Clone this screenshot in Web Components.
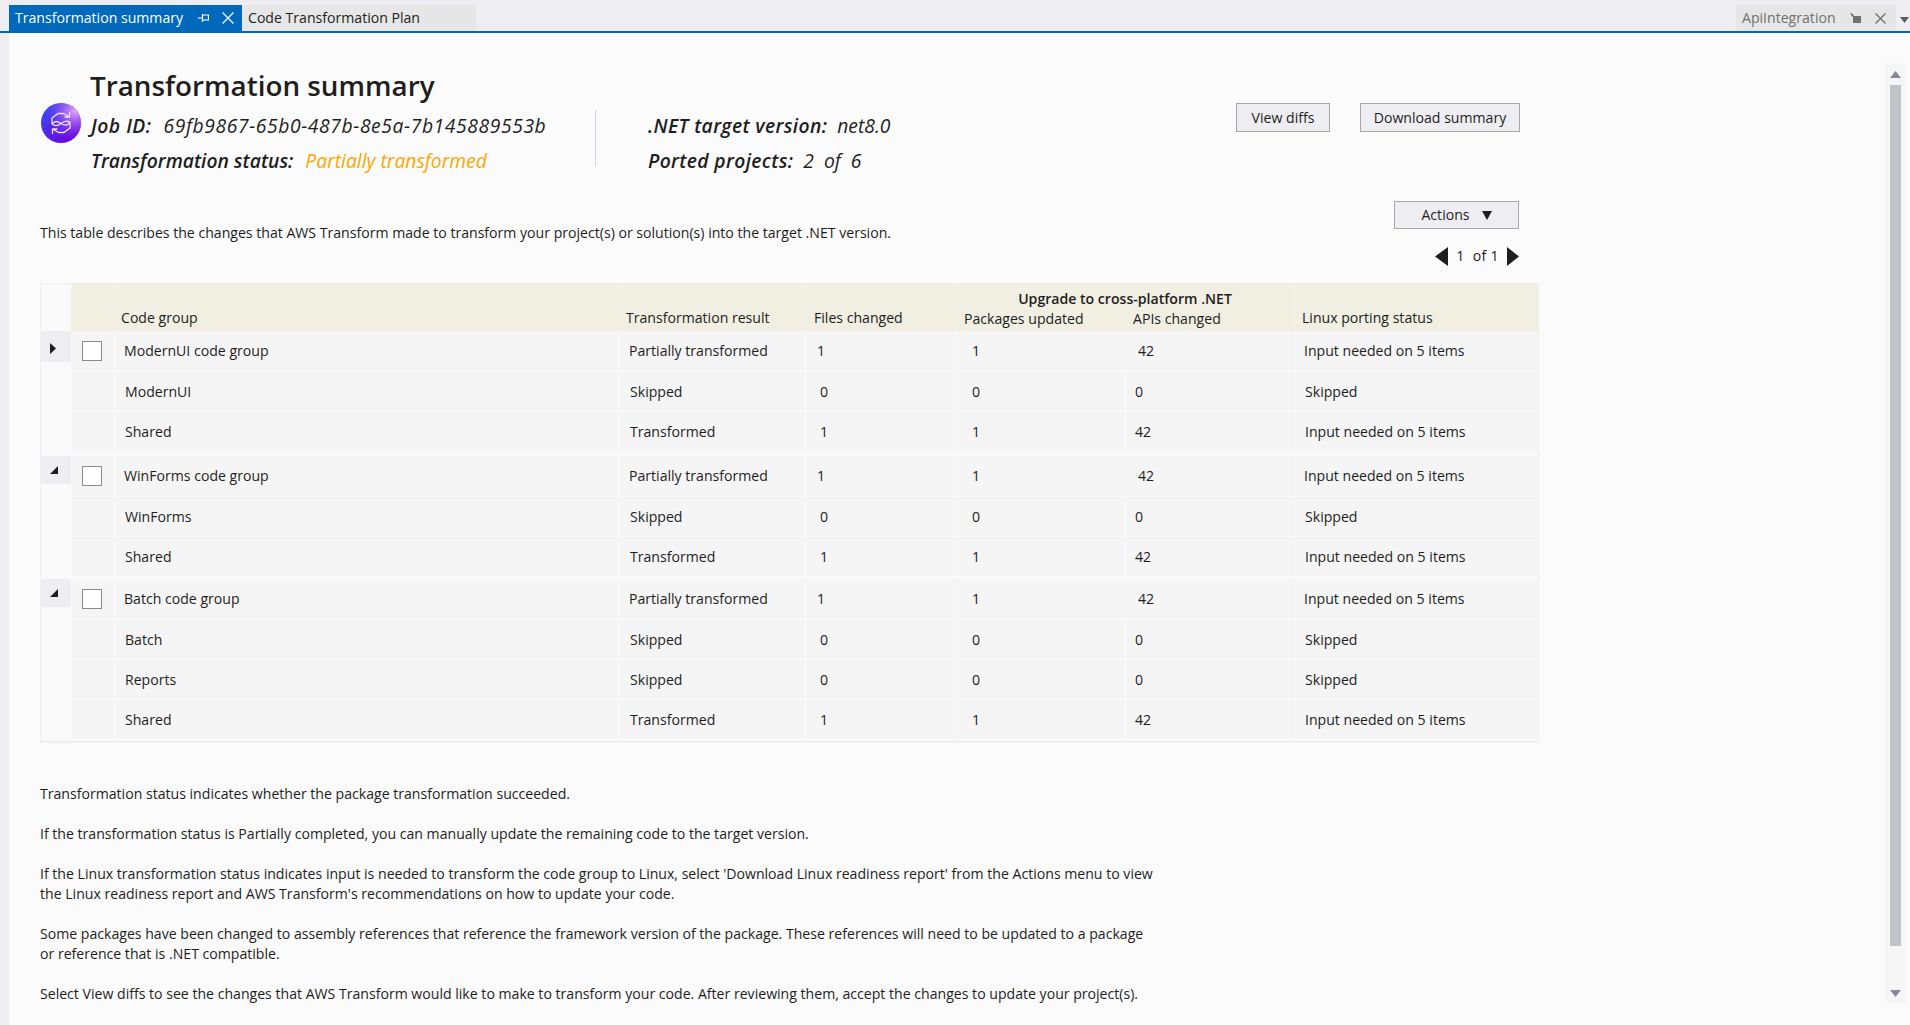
<!doctype html>
<html><head><meta charset="utf-8"><style>
html,body{margin:0;height:100%;overflow:hidden;background:#eeeef2}
body{font:14.1px/20px "Open Sans","Noto Sans",sans-serif;color:#1e1e1e}
#page{height:1025px;display:flex;flex-direction:column}
</style></head><body>
<template id="t-strip"><style>
:host{display:flex;height:33px;box-sizing:border-box;padding:5px 0 0 9px;border-bottom:2px solid #0069bc;align-items:stretch}
.sp{flex:1}.r{display:flex;align-items:center;width:10px;padding-left:4px;padding-top:3px}
</style><slot></slot><div class="sp"></div><slot name="end"></slot><div class="r"><svg width="9" height="6" viewBox="0 0 9 6"><path d="M0 0h9L4.500 6z" fill="#5a5a64"/></svg></div></template>
<template id="t-tab"><style>
:host{display:flex;align-items:center;height:26px;box-sizing:border-box;background:#e6e6e6;color:#1e1e1e;padding-left:6px;overflow:hidden;white-space:nowrap}
:host([active]){background:#0069bc;color:#fff;padding-right:8px}
:host([muted]){color:#717171;padding-right:10px}
.t{display:block;flex:1;padding-bottom:1px}
:host([active]) .t{padding-bottom:0}
::slotted(svg){flex:none}
</style><span class="t"><slot></slot></span><slot name="icons"></slot></template>
<template id="t-canvas"><style>
:host{display:flex;flex:1;min-height:0;margin-left:9px;background:#fbfbfb}
.c{flex:1;min-width:0;padding:0 0 0 31px}
.s{flex:none;width:21px;margin:30px 4px 22px 0}
</style><div class="c"><slot></slot></div><div class="s"><slot name="scroll"></slot></div></template>
<template id="t-scroll"><style>
:host{display:flex;flex-direction:column;align-items:center;height:100%;background:#f6f6f6}
.th{flex:1;width:11px;background:#c2c3c9;margin:7px 0 44px}
svg{display:block;flex:none}
</style><svg width="11" height="7" viewBox="0 0 11 7" style="margin-top:8px"><path d="M5.500 0L11 7H0z" fill="#868999"/></svg><div class="th"></div><svg width="11" height="7" viewBox="0 0 11 7" style="margin-bottom:6px"><path d="M0 0h11L5.500 7z" fill="#868999"/></svg></template>
<template id="t-head"><style>
:host{display:block;height:168px;box-sizing:border-box}
h1{margin:0 0 0 50px;padding-top:32px;font-weight:600;font-size:27.800px;line-height:41px}
.g{display:grid;grid-template-columns:50px 506px 52px 1fr auto;height:60px;align-items:start}
.ic{margin:-3px 0 0 1px}
.ic ::slotted(svg){display:block}
.col{font-style:italic;font-size:19.300px;line-height:35px;white-space:nowrap;padding-top:2px}
.col b{font-weight:600;margin-right:7px}
.row{height:35px}
.a{padding-left:1px}
.job b{letter-spacing:.5px}
.jv{letter-spacing:.6px}
.wide b{letter-spacing:.35px;margin-right:5px}
.dv{width:1px;height:56px;background:#d0d3e2;margin:4px 0 0 -1px}
.am{color:#ffa500}
.pt{letter-spacing:-.1px}
.btns{display:flex;gap:30px;margin:-3px 365px 0 0;width:284px}
</style><h1><slot name="title"></slot></h1>
<div class="g"><div class="ic"><slot name="icon"></slot></div>
<div class="col a"><div class="row job"><b>Job ID:</b> <span class="jv"><slot name="job"></slot></span></div><div class="row"><b>Transformation status:</b> <span class="am"><slot name="status"></slot></span></div></div>
<div class="dv"></div>
<div class="col wide"><div class="row"><b>.NET target version:</b> <slot name="ver"></slot></div><div class="row"><b>Ported projects:</b> <slot name="ported"></slot></div></div>
<div class="btns"><slot name="btns"></slot></div></div></template>
<template id="t-btn"><style>
:host{display:inline-flex;box-sizing:border-box;height:29px;align-items:center;justify-content:center;background:#eeeef2;border:1px solid #a8a8a8;color:#1e1e1e;white-space:nowrap}
.a{margin-left:12px;display:none}
:host([menu]) .a{display:block}
</style><slot></slot><svg class="a" width="10" height="9" viewBox="0 0 10 9"><path d="M0 0h10L5 9z" fill="#1e1e1e"/></svg></template>
<template id="t-toolbar"><style>
:host{display:flex;width:1479px;height:82px;box-sizing:border-box;justify-content:space-between;align-items:flex-start}
.d{padding-top:22px}
.r{display:flex;flex-direction:column;align-items:flex-end;gap:18px}
.p{display:flex;align-items:center;gap:8px;height:19px;letter-spacing:.35px}
.p span{display:block;margin-top:-2px}
svg{display:block}
</style><div class="d"><slot></slot></div><div class="r"><slot name="actions"></slot><div class="p"><svg width="13" height="19" viewBox="0 0 13 19"><path d="M13 0v19L0 9.500z" fill="#1e1e1e"/></svg><span><slot name="pager"></slot></span><svg width="12" height="19" viewBox="0 0 12 19"><path d="M0 0v19l12-9.500z" fill="#1e1e1e"/></svg></div></div></template>
<template id="t-table"><style>
:host{display:block;width:1499px;box-sizing:border-box;border:1px solid #efeff3;border-bottom-width:2px;background:#fafafa;height:460px}
</style><slot></slot></template>
<template id="t-hrow"><style>
:host{display:grid;grid-template-columns:30px 43px 504px 187px 150px 170px 169px 244px;grid-template-rows:30px 17px;height:47px}
.e{grid-row:1/3}
.c{grid-row:1/3;background:#f0efe2;border-left:1px solid #f3f2e8;box-sizing:border-box;display:flex;align-items:flex-end;line-height:20px;padding-bottom:3px;white-space:nowrap}
.u{grid-column:6/8;grid-row:1;background:#f0efe2;text-align:center;font-weight:600;padding-top:5px;white-space:nowrap;line-height:20px;border-left:1px solid #f3f2e8}
.l{background:#f0efe2;display:flex;white-space:nowrap;line-height:20px;margin-top:-5px;align-items:center;height:22px;padding-bottom:2px;box-sizing:border-box}
</style><div class="e"></div><div class="c"></div><div class="c" style="padding-left:6px"><slot name="c1"></slot></div><div class="c" style="padding-left:7px"><slot name="c2"></slot></div><div class="c" style="padding-left:8px"><slot name="c3"></slot></div>
<div class="u"><slot name="up"></slot></div><div class="l" style="grid-column:6;grid-row:2;padding-left:9px"><slot name="c4"></slot></div><div class="l" style="grid-column:7;grid-row:2;padding-left:8px"><slot name="c5"></slot></div>
<div class="c" style="padding-left:7px;grid-column:8"><slot name="c6"></slot></div></template>
<template id="t-row"><style>
:host{display:grid;grid-template-columns:30px 43px 504px 187px 150px 170px 169px 244px;height:39px;margin-top:1px}
:host([group]){height:40px;margin-top:5px}
:host([first]){margin-top:0}
:host([last-group]){margin-top:3px}
.c{background:#f5f5f5;box-sizing:border-box;border-left:1px solid #f9f9f9;display:flex;align-items:center;white-space:nowrap}
.c1{padding-left:10px}.c2{padding-left:11px}.c3{padding-left:14px}.c4{padding-left:16px}.c5{padding-left:9px}.c6{padding-left:10px}
:host([group]) .c1{padding-left:9px}:host([group]) .c2{padding-left:10px}:host([group]) .c3{padding-left:11px}:host([group]) .c5{padding-left:12px}:host([group]) .c6{padding-left:9px}
.ex{display:none;height:28px;background:#eeeef2;align-items:center;padding:0 0 0 9px;box-sizing:border-box}
:host([group]) .ex{display:flex}
:host([first]) .ex{height:31px;padding-top:3px}
.ex svg{display:none}
:host([open]) .ex .o,:host(:not([open])) .ex .cl{display:block}
.bx{visibility:hidden;width:20px;height:20px;box-sizing:border-box;background:#fff;border:1px solid #8a8a8a;margin:0 0 0 10px}
:host([group]) .bx{visibility:visible}
:host([group]) .c5{border-left-color:#f5f5f5}
</style><div><div class="ex"><svg class="cl" width="6" height="11" viewBox="0 0 6 11"><path d="M0 0l6 5.500L0 11z" fill="#1e1e1e"/></svg><svg class="o" width="8" height="8" viewBox="0 0 8 8"><path d="M8 0v8H0z" fill="#1e1e1e"/></svg></div></div>
<div class="c"><div class="bx"></div></div>
<div class="c c1"><slot name="a"></slot></div><div class="c c2"><slot name="b"></slot></div><div class="c c3"><slot name="d"></slot></div><div class="c c4"><slot name="e"></slot></div><div class="c c5"><slot name="f"></slot></div><div class="c c6"><slot name="g"></slot></div></template>
<template id="t-notes"><style>
:host{display:block;width:1120px;padding-top:41px}
::slotted(p){margin:0 0 20px;line-height:20px}
</style><slot></slot></template>
<script>
for(const [n,t] of [['tab-strip','t-strip'],['doc-tab','t-tab'],['doc-canvas','t-canvas'],['v-scroll','t-scroll'],['summary-head','t-head'],['act-btn','t-btn'],['tool-bar','t-toolbar'],['data-table','t-table'],['head-row','t-hrow'],['data-row','t-row'],['note-list','t-notes']]){
 customElements.define(n,class extends HTMLElement{constructor(){super();this.attachShadow({mode:'open'}).append(document.getElementById(t).content.cloneNode(true))}});
}
</script>
<div id="page">
<tab-strip>
 <doc-tab active style="width:233px">Transformation summary
  <svg slot="icons" width="11" height="10" viewBox="0 0 11 10" fill="none" stroke="#fff" stroke-width="1.200"><path d="M0 5h4M4.500 1v8M4.500 2h6v5h-6"/></svg>
  <svg slot="icons" width="12" height="12" viewBox="0 0 12 12" style="margin-left:13px" fill="none" stroke="#dbe9f6" stroke-width="1.500"><path d="M.5.500l11 11M11.500.500l-11 11"/></svg>
 </doc-tab>
 <doc-tab style="width:234px">Code Transformation Plan</doc-tab>
 <doc-tab slot="end" muted style="width:160px">ApiIntegration
  <svg slot="icons" width="12" height="11" viewBox="0 0 12 11" fill="#717171"><path d="M3 3h8v7H3zM0 0l3 1 1 2-2 .5z"/></svg>
  <svg slot="icons" width="11" height="11" viewBox="0 0 11 11" style="margin-left:13px" fill="none" stroke="#717171" stroke-width="1.400"><path d="M.5.500l10 10M10.500.500l-10 10"/></svg>
 </doc-tab>
</tab-strip>
<doc-canvas>
 <summary-head>
  <span slot="title">Transformation summary</span>
  <svg slot="icon" width="40" height="40" viewBox="0 0 40 40"><defs><radialGradient id="g1" cx=".85" cy=".2" r=".75"><stop offset="0" stop-color="#e3a8f7"/><stop offset="1" stop-color="#8a3cf0" stop-opacity="0"/></radialGradient><linearGradient id="g2" x1="0" y1=".3" x2=".7" y2="1"><stop offset="0" stop-color="#3a46ee"/><stop offset="1" stop-color="#7000e0"/></linearGradient></defs><circle cx="20" cy="20" r="20" fill="url(#g2)"/><circle cx="20" cy="20" r="20" fill="url(#g1)"/><g fill="none" stroke="#efe0ff" stroke-width="1.300" stroke-linejoin="round"><path d="M11 21v-6l6-4.500h5.500l5 3M28.500 9v5h-5"/><path d="M29 19v6l-6 4.500h-5.500l-5-3M11.500 31v-5h5"/><path d="M11 21c3 2.500 6 2 9-.500s6-3 9-1.500M11 21c3-3.500 5-3 9-.500s6 2.500 9-1.500"/></g></svg>
  <span slot="job">69fb9867-65b0-487b-8e5a-7b145889553b</span>
  <span slot="status">Partially transformed</span>
  <span slot="ver">net8.0</span>
  <span slot="ported">2&nbsp; of&nbsp; 6</span>
  <act-btn slot="btns" style="width:94px">View diffs</act-btn>
  <act-btn slot="btns" style="width:160px">Download summary</act-btn>
 </summary-head>
 <tool-bar>
  This table describes the changes that AWS Transform made to transform your project(s) or solution(s) into the target .NET version.
  <act-btn slot="actions" menu style="width:125px;height:28px">Actions</act-btn>
  <span slot="pager">1&nbsp; of 1</span>
 </tool-bar>
 <data-table>
  <head-row><span slot="c1">Code group</span><span slot="c2">Transformation result</span><span slot="c3">Files changed</span><span slot="up">Upgrade to cross-platform .NET</span><span slot="c4">Packages updated</span><span slot="c5">APIs changed</span><span slot="c6">Linux porting status</span></head-row>
  <data-row group first><span slot="a">ModernUI code group</span><span slot="b">Partially transformed</span><span slot="d">1</span><span slot="e">1</span><span slot="f">42</span><span slot="g">Input needed on 5 items</span></data-row>
  <data-row><span slot="a">ModernUI</span><span slot="b">Skipped</span><span slot="d">0</span><span slot="e">0</span><span slot="f">0</span><span slot="g">Skipped</span></data-row>
  <data-row><span slot="a">Shared</span><span slot="b">Transformed</span><span slot="d">1</span><span slot="e">1</span><span slot="f">42</span><span slot="g">Input needed on 5 items</span></data-row>
  <data-row group open><span slot="a">WinForms code group</span><span slot="b">Partially transformed</span><span slot="d">1</span><span slot="e">1</span><span slot="f">42</span><span slot="g">Input needed on 5 items</span></data-row>
  <data-row><span slot="a">WinForms</span><span slot="b">Skipped</span><span slot="d">0</span><span slot="e">0</span><span slot="f">0</span><span slot="g">Skipped</span></data-row>
  <data-row><span slot="a">Shared</span><span slot="b">Transformed</span><span slot="d">1</span><span slot="e">1</span><span slot="f">42</span><span slot="g">Input needed on 5 items</span></data-row>
  <data-row group open last-group><span slot="a">Batch code group</span><span slot="b">Partially transformed</span><span slot="d">1</span><span slot="e">1</span><span slot="f">42</span><span slot="g">Input needed on 5 items</span></data-row>
  <data-row><span slot="a">Batch</span><span slot="b">Skipped</span><span slot="d">0</span><span slot="e">0</span><span slot="f">0</span><span slot="g">Skipped</span></data-row>
  <data-row><span slot="a">Reports</span><span slot="b">Skipped</span><span slot="d">0</span><span slot="e">0</span><span slot="f">0</span><span slot="g">Skipped</span></data-row>
  <data-row><span slot="a">Shared</span><span slot="b">Transformed</span><span slot="d">1</span><span slot="e">1</span><span slot="f">42</span><span slot="g">Input needed on 5 items</span></data-row>
 </data-table>
 <note-list>
  <p>Transformation status indicates whether the package transformation succeeded.</p>
  <p>If the transformation status is Partially completed, you can manually update the remaining code to the target version.</p>
  <p>If the Linux transformation status indicates input is needed to transform the code group to Linux, select 'Download Linux readiness report' from the Actions menu to view the Linux readiness report and AWS Transform's recommendations on how to update your code.</p>
  <p>Some packages have been changed to assembly references that reference the framework version of the package. These references will need to be updated to a package or reference that is .NET compatible.</p>
  <p>Select View diffs to see the changes that AWS Transform would like to make to transform your code. After reviewing them, accept the changes to update your project(s).</p>
 </note-list>
 <v-scroll slot="scroll"></v-scroll>
</doc-canvas>
</div>
</body></html>
